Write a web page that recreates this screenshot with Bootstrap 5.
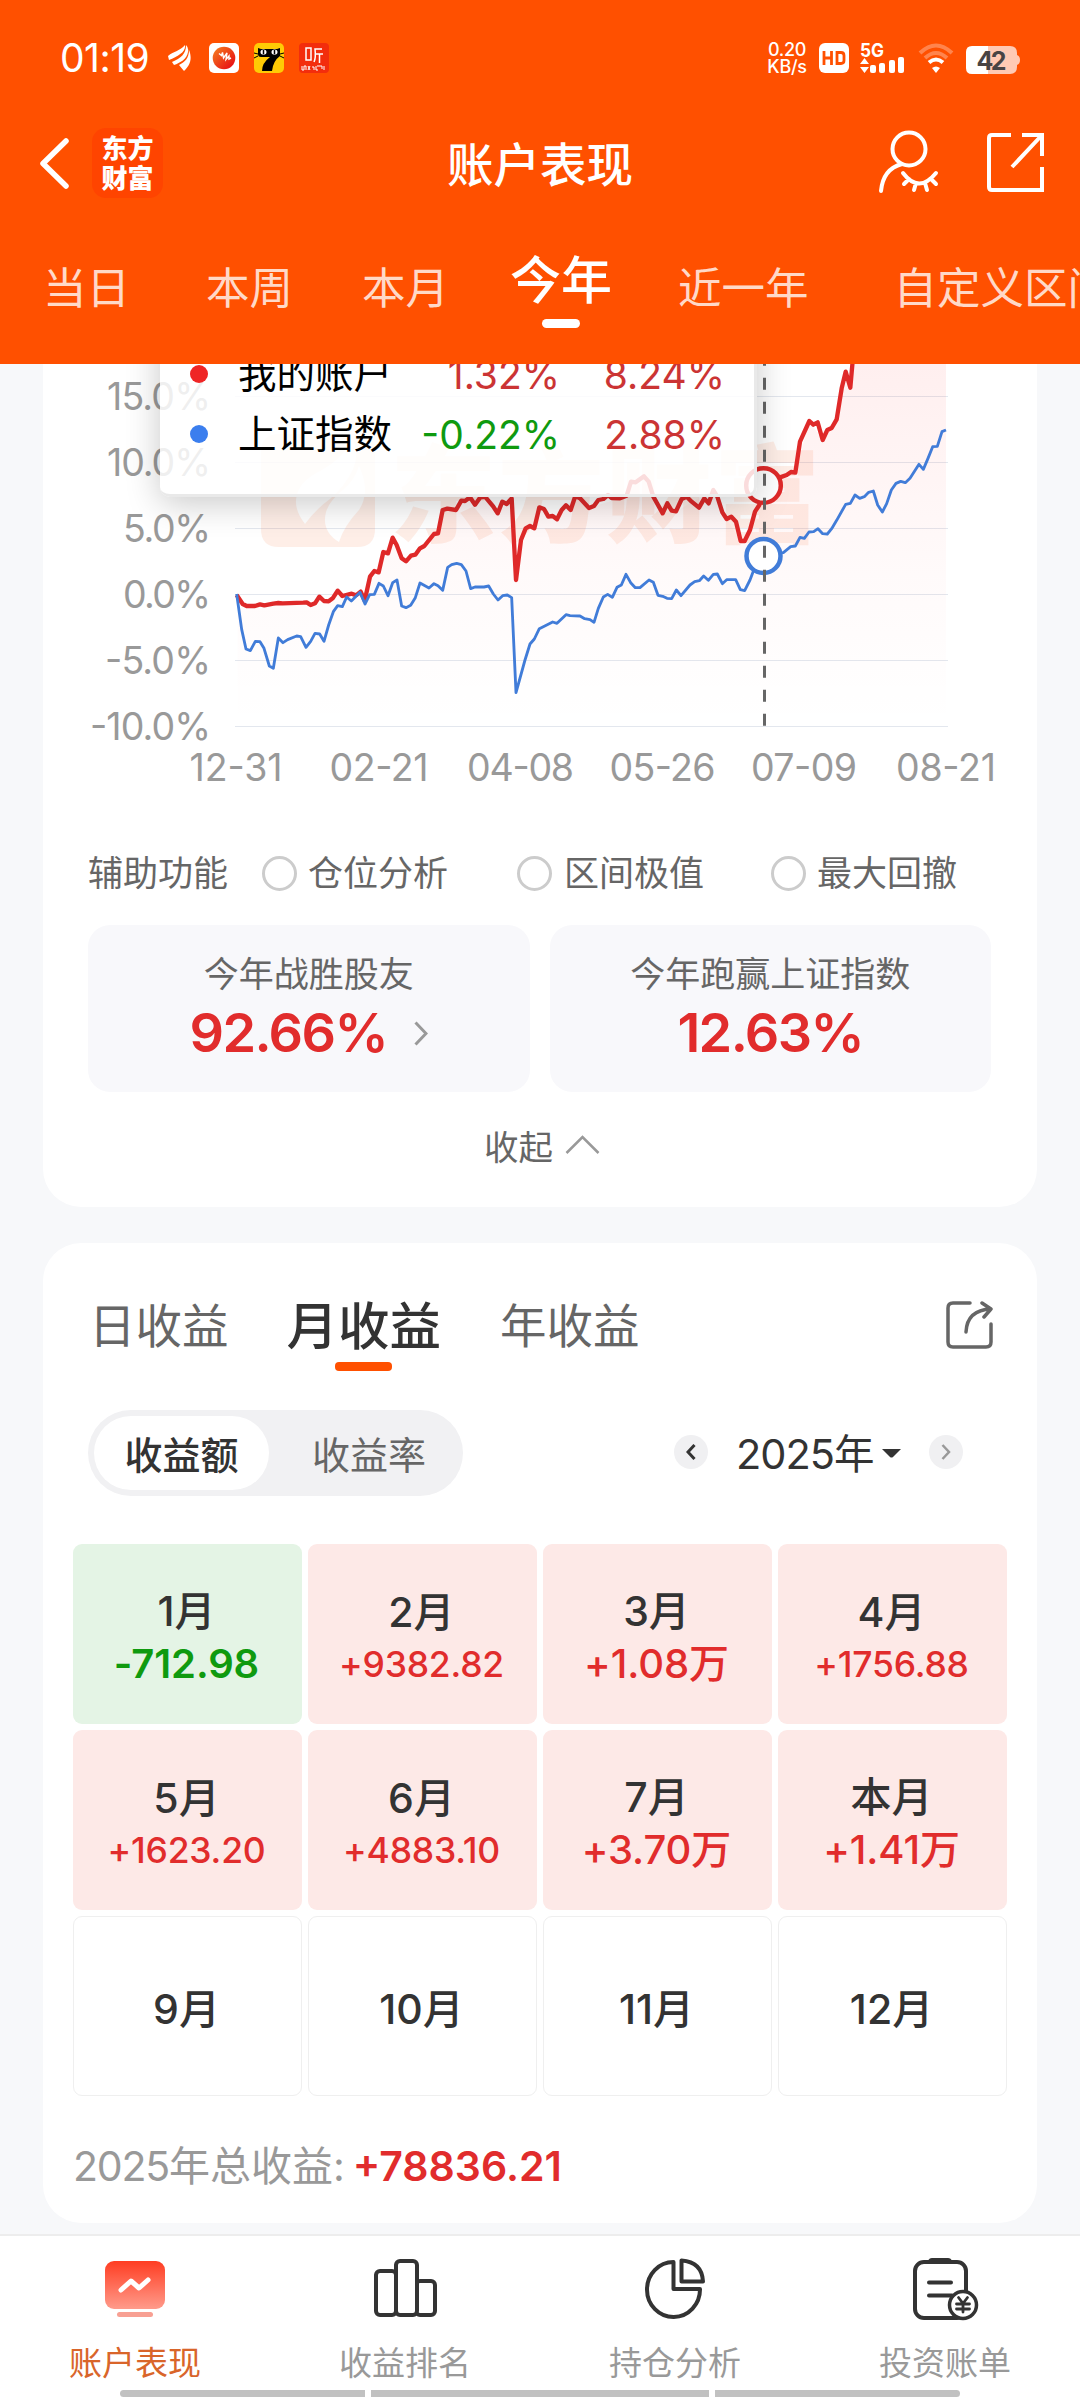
<!DOCTYPE html>
<html lang="zh-CN">
<head>
<meta charset="utf-8">
<meta name="viewport" content="width=device-width, initial-scale=1">
<title>账户表现</title>
<link rel="stylesheet" href="https://cdn.jsdelivr.net/npm/bootstrap@5.3.0/dist/css/bootstrap.min.css">
<style>
  body{width:1080px;height:2400px;overflow:hidden;background:#f7f8fa;font-family:Inter,"Noto Sans CJK SC",sans-serif;color:#333;line-height:1;white-space:nowrap}
  svg{display:block;flex:none}
  .app-head{height:364px;background:#ff5000;color:#fff}
  .status-row{height:116px;padding:0 60px}
  .clock-text{font-size:39px;width:89px;line-height:44px;letter-spacing:-.5px}
  .net-speed{font-size:18px;line-height:17px;width:42px;text-align:center;letter-spacing:-.3px;font-weight:500}
  .title-row{height:98px;padding:0 36px 0 40px}
  .brand-box{width:71px;height:70px;border-radius:14px;background:#ff4400;font:900 26px/30px "Noto Sans CJK SC",sans-serif;margin-left:23px}
  .page-title{font-size:46.5px;font-weight:500}
  .period-tabs{height:150px;padding:53px 0 0 43px;font-size:43.5px;color:#ffd9c8;line-height:43px}
  .period-tabs .on{font-size:51px;font-weight:500;color:#fff;line-height:50px;margin-top:-11px}
  .period-tabs .on::after{content:"";display:block;width:38px;height:9px;border-radius:5px;background:#fff;margin:13px auto 0}
  .panel{width:994px;margin:0 auto;background:#fff}
  .panel-a{height:843px;border-radius:0 0 38px 38px}
  .panel-b{height:980px;margin-top:36px;border-radius:38px}
  .chart-box{height:440px;position:relative;overflow:hidden;margin-bottom:40px}
  .tip-box{position:absolute;left:117px;top:-80px;width:597px;height:213px;background:rgba(255,255,255,.84);border:solid #e9e9e9;border-width:0 3px 3px 0;border-radius:10px;box-shadow:0 6px 34px rgba(0,0,0,.22);padding-top:60px;color:#000;font-size:38.5px}
  .tip-box .line{height:60px;padding:0 29px 0 30px}
  .tip-box .dot{width:18px;height:18px;border-radius:50%;margin-right:30px}
  .tip-box .num{font-size:39px;text-align:right;letter-spacing:0}
  .red{color:#e12c2c}.tip-box .red{color:#cb3434}.green{color:#0f9a0f}
  .aid-row{height:58px;margin-bottom:-2px;padding-left:45px;font-size:35px;color:#666}
  .ring{width:35px;height:35px;border:3px solid #ccc;border-radius:50%}
  .stat-row{padding:25px 46px 0 45px;gap:20px}
  .stat-box{height:167px;border-radius:22px;background:#f8f8fb;padding-top:32px}
  .stat-box .cap{font-size:35px;line-height:35px;color:#666}
  .stat-box .val{font-size:54px;line-height:54px;font-weight:600;margin-top:14px;letter-spacing:-1.6px}
  .fold-row{height:40px;margin-top:36px;font-size:34.5px;color:#666}
  .kind-tabs{height:102px;padding:51px 44px 0 46px;font-size:46.5px;line-height:64px;color:#666}
  .kind-tabs .on{font-size:51.5px;font-weight:500;color:#333;margin-left:58px}
  .kind-tabs .on::after{content:"";display:block;width:57px;height:9px;border-radius:4px;background:#ff5000;margin:4px auto 0}
  .pick-row{height:86px;margin-top:65px;padding-left:45px}
  .switch-pill{width:375px;height:86px;border-radius:43px;background:#f1f1f3;padding:6px;font-size:38px;color:#666}
  .switch-pill>div{height:74px;border-radius:37px;width:175px;padding-top:3px}
  .switch-pill>.on{background:#fff;color:#333;font-weight:500}
  .round-btn{width:34px;height:34px;border-radius:50%;background:#f0f0f2}
  .month-grid{display:grid;grid-template-columns:repeat(4,229px);grid-auto-rows:180px;gap:6px;margin:48px 30px 0}
  .cell{border-radius:9px;background:#fde9e7;font-size:41px;font-weight:500;line-height:48px;padding:12px 2px 0 0}
  .cell .amt{font-size:35.5px;line-height:57px;letter-spacing:-.2px}
  .cell .amt.big{font-size:40px;letter-spacing:-.1px}
  .cell .big-sum{margin-top:-1px}
  .cell.gain-neg{background:#e4f4e5}
  .cell.gain-neg .amt{font-weight:600}
  .cell.none{background:#fff;border:1.5px solid #efefef;padding-top:6px}
  .sum-row{font-size:41px;color:#999;padding-left:30px;margin-top:46px;line-height:48px}
  .foot-bar{height:166px;margin-top:11px;background:#fff;border-top:2px solid #ededed}
  .foot-bar .tab-item{width:270px;padding-top:20px;font-size:33px;color:#999}
  .tab-item svg{margin-bottom:25px}
  .home-bars{gap:6px;height:7px;margin-top:10px}
  .home-bars i{background:#c1c1c1;height:7px}
</style>
</head>
<body>
<header class="app-head">
  <div class="status-row d-flex align-items-center">
    <div class="clock-text">01:19</div>
    <svg width="24" height="30" viewBox="0 0 24 30" style="margin-left:19px" fill="#fff"><path d="M0 13C6 8 12 8 17 2C18 9 10 13 1 17ZM4 19C13 15 18 11 18 2Q21 5 20 9C19 16 12 20 6 22ZM11 22C17 19 21 15 21 7C25 17 21 23 16 28Z"/></svg>
    <svg width="30" height="30" viewBox="0 0 30 30" style="margin-left:17px"><defs><linearGradient id="ball" x1="0" y1="0" x2="1" y2="1"><stop offset="0" stop-color="#f58220"/><stop offset="1" stop-color="#e60012"/></linearGradient></defs><rect width="30" height="30" rx="5" fill="#fff"/><circle cx="15" cy="15" r="11.3" fill="url(#ball)"/><path d="M10 10.500l2.500 2 1-3 1 5.500 3.500-5-1 6.500 3-3.500 0 3 2-1" fill="none" stroke="#fff" stroke-width="1.400"/></svg>
    <svg width="30" height="30" viewBox="0 0 30 30" style="margin-left:15px"><rect width="30" height="30" rx="5" fill="#ffcb05"/><path d="M4 5l3 1h16l3-1v8q-7 5-8 15H8q0-8 8-14H7q-3 0-3-3Z"/><path d="M0 10l4 1M0 15l4-2M30 10l-4 1M30 15l-4-2" stroke="#000"/><ellipse cx="9.500" cy="9" rx="3" ry="2.600" fill="#fff"/><ellipse cx="20.500" cy="9" rx="3" ry="2.600" fill="#fff"/><path d="M9.500 7v4M20.500 7v4" stroke="#000" stroke-width="1.500"/></svg>
    <svg width="30" height="30" viewBox="0 0 30 30" style="margin-left:15px"><rect width="30" height="30" rx="4" fill="#f32d0c"/><g fill="none" stroke="#fff" stroke-width="1.500"><path d="M7 5h5v12H7ZM15 19q2-4 1-13h7M16 11h8M20.500 11v9"/><path d="M3 23v4h2v-4h2v4M9 23l2 4M11 23l-2 4M13 24h2v3M17 23v4h2M18 23h5v3M25 23v4" stroke-width="1"/></g></svg>
    <div class="ms-auto net-speed" style="margin-right:11px">0.20<br>KB/s</div>
    <svg width="30" height="30" viewBox="0 0 30 30" style="margin-right:11px"><rect width="30" height="30" rx="6" fill="#fff"/><path d="M5 8v14M12.500 8v14M5 15h7.500M18 9.500h4q3 0 3 3v5q0 3-3 3h-4Z" stroke="#ff5000" stroke-width="2.800" fill="none"/></svg>
    <svg width="45" height="30" viewBox="0 0 45 30" style="margin-right:13px" fill="#fff"><text x="0" y="14" font-size="18.500" font-weight="700" textLength="24" lengthAdjust="spacingAndGlyphs">5G</text><path d="M0 21l4.500-6 4.500 6zM0 24h9l-4.500 6z"/><rect x="10" y="22" width="6" height="8" rx="2"/><rect x="19" y="20" width="6" height="10" rx="2"/><rect x="29" y="17" width="6" height="13" rx="2"/><rect x="38" y="14" width="6" height="16" rx="2"/></svg>
    <svg width="36" height="30" viewBox="0 0 36 30" style="margin-right:12px" fill="none" stroke="#fff" stroke-width="4"><path d="M2 10q16-15 32 0M7 15q11-10 22 0" opacity=".3"/><path d="M11 19.500q7-6 14 0"/><path d="M14 25q4-3 8 0l-4 5z" fill="#fff" stroke="none"/></svg>
    <svg width="54" height="28" viewBox="0 0 54 28" style="margin-top:4px"><path d="M6 0H22V28H6Q0 28 0 22V6Q0 0 6 0" fill="#fff"/><path d="M22 0h22q7 0 7 7v2q3 1 3 5t-3 5v2q0 7-7 7H22z" fill="#ffcab4"/><text x="25.500" y="23.500" font-size="25" font-weight="700" fill="#494444" text-anchor="middle" textLength="30">42</text></svg>
  </div>
  <div class="title-row d-flex align-items-center position-relative">
    <svg width="29" height="51" viewBox="0 0 29 51" style="margin-top:-3px" fill="none" stroke="#fff" stroke-width="5.500" stroke-linecap="round" stroke-linejoin="round"><path d="M26 3 3 25.500 26 48"/></svg>
    <div class="brand-box text-center pt-1" style="margin-top:-4px">东方<br>财富</div>
    <div class="page-title position-absolute start-50 translate-middle-x">账户表现</div>
    <svg class="ms-auto" width="62" height="64" viewBox="0 0 62 64" style="margin-top:-6px" fill="none" stroke="#fff" stroke-width="4" stroke-linecap="round"><circle cx="32" cy="19" r="16.500"/><path d="M25 34Q6 39 4 61M26 43q16 21 33 0M32 49l-5 5M39 53l-2 7M48 53l2 7M54 49l5 5"/></svg>
    <svg width="57" height="59" viewBox="0 0 57 59" style="margin-left:48px;margin-top:-6px" fill="none" stroke="#fff" stroke-width="4"><path d="M24 2H5Q2 2 2 5V54Q2 57 5 57H55V34M35 2H55V23M55 2 25 34"/></svg>
  </div>
  <nav class="period-tabs d-flex overflow-hidden">
    <div>当日</div><div style="margin-left:76px">本周</div><div style="margin-left:69px">本月</div><div class="on" style="margin-left:61px">今年</div><div style="margin-left:66px">近一年</div><div style="margin-left:85px">自定义区间</div>
  </nav>
</header>

<section class="panel panel-a">
  <div class="chart-box">
    <svg width="994" height="440" viewBox="43 364 994 440">
      <defs><linearGradient id="fade" gradientUnits="userSpaceOnUse" x1="0" y1="0" x2="0" y2="1129"><stop offset="0" stop-color="#ff2020" stop-opacity=".075"/><stop offset=".6" stop-color="#ff2020" stop-opacity=".022"/><stop offset="1" stop-color="#ff2020" stop-opacity="0"/></linearGradient></defs>
      <path d="M235 396.500H948M235 462.500H948M235 528.500H948M235 594.500H948M235 660.500H948M235 726.500H948" stroke="#e3e7ee"/>
      <g fill="#fb6a2c" opacity=".11">
        <path fill-rule="evenodd" d="M279 434H357Q375 434 375 452V529Q375 547 357 547H279Q261 547 261 529V452Q261 434 279 434M296 500Q297 482 322 470Q346 456 352 438Q360 453 353 469Q345 486 330 499Q316 509 305 524Q295 511 296 500M339 542Q321 531 326 512Q329 501 343 490Q355 480 359 466Q371 492 359 510Q344 526 339 542"/>
        <text x="390" y="534" font-size="106" font-weight="900" textLength="430">东方财富</text>
      </g>
      <g fill="none" stroke-linejoin="round" transform="translate(60 350) scale(.333333)">
        <path fill="url(#fade)" d="M533 735 548 762 560 768 730 758 752 765 778 740 806 754 833 722 914 752 943 663 956 667 970 606 998 563 1025 625 1038 634 1080 595 1134 550 1148 480 1188 480 1204 452 1300 452 1313 490 1355 445 1368 690 1397 535 1423 535 1438 472 1491 508 1546 438 1587 474 1680 445 1752 379 1780 440 1808 490 1848 484 1960 420 2000 507 2042 573 2070 540 2113 407 2206 368 2248 213 2288 270 2330 208 2357 65 2371 113 2380 20 2658 -100 2658 1129 533 1129Z"/>
        <path stroke="#df2929" stroke-width="13" d="M530 735 548 762 560 768 585 768 600 763 613 766 640 761 655 759 668 760 730 758 740 757 752 765 765 760 778 740 792 753 806 754 818 745 833 722 847 738 875 731 888 736 902 725 914 752 930 680 943 663 956 667 970 606 984 610 998 563 1010 585 1025 625 1038 634 1053 617 1066 614 1080 595 1093 588 1122 552 1134 550 1148 480 1162 476 1188 480 1204 452 1215 453 1230 442 1245 464 1260 443 1275 440 1300 470 1313 490 1327 455 1340 462 1355 445 1368 690 1383 570 1397 535 1410 528 1423 535 1438 472 1452 477 1465 500 1478 498 1491 508 1505 480 1518 466 1532 480 1546 438 1560 445 1587 474 1602 468 1615 450 1630 447 1644 435 1655 444 1680 445 1700 437 1713 395 1727 397 1752 379 1766 395 1780 440 1808 490 1822 460 1835 482 1848 484 1865 447 1880 440 1895 455 1917 473 1933 445 1946 460 1960 420 1972 440 1987 487 2000 507 2014 500 2028 515 2042 573 2054 573 2070 540 2085 485 2098 465 2113 407 2160 382 2180 375 2193 366 2206 368 2220 275 2248 213 2260 224 2273 217 2288 270 2302 240 2315 234 2330 208 2345 115 2357 65 2371 113 2380 10"/>
        <path stroke="#417cd8" stroke-width="8.500" d="M530 732 545 838 558 897 571 902 586 874 600 875 612 895 628 948 640 955 655 864 669 878 683 869 710 858 722 860 738 892 752 874 765 850 779 852 792 874 806 825 820 785 833 767 847 770 860 741 874 753 900 727 915 762 929 734 943 733 957 700 970 708 984 737 998 698 1011 690 1025 768 1038 773 1052 766 1066 743 1080 699 1107 714 1122 701 1134 707 1148 721 1163 652 1175 644 1190 640 1204 644 1218 663 1232 716 1245 711 1272 711 1286 708 1300 732 1314 750 1328 737 1342 735 1355 743 1368 1028 1395 930 1410 882 1423 867 1438 836 1478 816 1491 820 1518 794 1530 797 1560 798 1574 806 1590 809 1602 817 1615 775 1630 741 1643 733 1657 742 1671 712 1684 705 1698 673 1712 698 1726 713 1740 713 1767 690 1780 697 1794 736 1808 739 1821 745 1835 746 1849 720 1863 737 1890 705 1904 695 1918 692 1931 678 1945 691 1960 673 1972 672 1987 701 2000 689 2027 689 2041 719 2054 722 2070 690 2085 650 2113 618 2170 608 2192 590 2206 588 2220 562 2233 565 2247 546 2261 545 2274 536 2288 551 2302 552 2315 536 2330 511 2357 463 2371 460 2385 435 2399 445 2413 440 2426 427 2440 423 2453 465 2467 486 2480 461 2494 420 2508 400 2522 394 2536 398 2550 385 2577 343 2590 358 2604 325 2618 290 2632 289 2646 245 2658 240"/>
      </g>
      <g fill="#fff" stroke-width="4.500"><circle cx="763.500" cy="485.500" r="17.300" stroke="#df2929"/><circle cx="763.500" cy="556" r="17" stroke="#417cd8"/></g>
      <path d="M764.500 353.700V726" stroke="#666" stroke-width="3" stroke-dasharray="12 12"/>
      <g font-size="37.500" fill="#999" text-anchor="end">
        <text x="211" y="410" textLength="104">15.0%</text><text x="211" y="476" textLength="104">10.0%</text><text x="211" y="542" textLength="88">5.0%</text><text x="211" y="608" textLength="88">0.0%</text><text x="211" y="673.500" textLength="106">-5.0%</text><text x="211" y="739.500" textLength="121">-10.0%</text>
      </g>
      <g font-size="37.500" fill="#999" text-anchor="middle">
        <text x="236" y="781" textLength="93">12-31</text><text x="379" y="781" textLength="99">02-21</text><text x="520.500" y="781" textLength="107">04-08</text><text x="662.500" y="781" textLength="106">05-26</text><text x="804" y="781" textLength="106">07-09</text><text x="946" y="781" textLength="100">08-21</text>
      </g>
    </svg>
    <div class="tip-box">
      <div class="line d-flex align-items-center"><span class="dot" style="background:#ef2525"></span><span>我的账户</span><span class="num red ms-auto" style="width:140px">1.32%</span><span class="num red" style="width:165px">8.24%</span></div>
      <div class="line d-flex align-items-center"><span class="dot" style="background:#3b7eee"></span><span>上证指数</span><span class="num green ms-auto" style="width:140px">-0.22%</span><span class="num red" style="width:165px">2.88%</span></div>
    </div>
  </div>
  <div class="aid-row d-flex align-items-center">
    <span>辅助功能</span>
    <span class="ring" style="margin-left:34px"></span><span style="margin-left:11px">仓位分析</span>
    <span class="ring" style="margin-left:69px"></span><span style="margin-left:12px">区间极值</span>
    <span class="ring" style="margin-left:67px"></span><span style="margin-left:11px">最大回撤</span>
  </div>
  <div class="stat-row d-flex text-center">
    <div class="stat-box flex-fill w-50"><div class="cap">今年战胜股友</div>
      <div class="val red d-flex justify-content-center align-items-center">92.66%<svg width="14" height="25" viewBox="0 0 14 25" style="margin-left:27px" fill="none" stroke="#999" stroke-width="3"><path d="M1.500 1.500 12 12.500 1.500 23.500"/></svg></div></div>
    <div class="stat-box flex-fill w-50"><div class="cap">今年跑赢上证指数</div><div class="val red">12.63%</div></div>
  </div>
  <div class="fold-row d-flex justify-content-center align-items-center ps-1">收起<svg width="35" height="19" viewBox="0 0 35 19" style="margin-left:12px;margin-top:-7px" fill="none" stroke="#999" stroke-width="2.500"><path d="M1.500 18 17.500 2 33.500 18"/></svg></div>
</section>

<section class="panel panel-b">
  <div class="kind-tabs d-flex">
    <div>日收益</div><div class="on">月收益</div><div style="margin-left:59px">年收益</div>
    <svg class="ms-auto" width="47" height="48" viewBox="0 0 47 48" style="margin-top:7px" fill="none" stroke="#666" stroke-width="3.500" stroke-linecap="round" stroke-linejoin="round"><path d="M24 2H7Q2 2 2 7V41Q2 46 7 46H40Q45 46 45 41V23M20 31Q21 9 45 8M36 2l9 6-7 8"/></svg>
  </div>
  <div class="pick-row d-flex align-items-center">
    <div class="switch-pill d-flex"><div class="on d-flex align-items-center justify-content-center">收益额</div><div class="d-flex align-items-center justify-content-center flex-fill ps-2 ms-1">收益率</div></div>
    <div class="round-btn d-flex align-items-center justify-content-center" style="margin-left:211px;margin-top:-3px"><svg width="10" height="16" viewBox="0 0 10 16" fill="none" stroke="#333" stroke-width="3"><path d="M8.500 1 2 8l6.500 7"/></svg></div>
    <div style="margin-left:28px;font-size:40.500px;width:139px;padding-top:3px"><span style="font-size:41.500px;letter-spacing:-1px">2025</span>年</div>
    <svg width="19" height="9" viewBox="0 0 19 9" style="margin-left:7px" fill="#333"><path d="M0 0H19L11 8Q9.500 9 8 8Z"/></svg>
    <div class="round-btn d-flex align-items-center justify-content-center" style="margin-left:28px;margin-top:-3px"><svg width="10" height="16" viewBox="0 0 10 16" fill="none" stroke="#999" stroke-width="2.500"><path d="M1.500 1 8 8l-6.500 7"/></svg></div>
  </div>
  <div class="month-grid text-center">
    <div class="cell gain-neg d-flex flex-column justify-content-center"><div class="big-sum">1月</div><div class="amt big green">-712.98</div></div>
    <div class="cell d-flex flex-column justify-content-center"><div>2月</div><div class="amt red">+9382.82</div></div>
    <div class="cell d-flex flex-column justify-content-center"><div class="big-sum">3月</div><div class="amt big red">+1.08万</div></div>
    <div class="cell d-flex flex-column justify-content-center"><div>4月</div><div class="amt red">+1756.88</div></div>
    <div class="cell d-flex flex-column justify-content-center"><div>5月</div><div class="amt red">+1623.20</div></div>
    <div class="cell d-flex flex-column justify-content-center"><div>6月</div><div class="amt red">+4883.10</div></div>
    <div class="cell d-flex flex-column justify-content-center"><div class="big-sum">7月</div><div class="amt big red">+3.70万</div></div>
    <div class="cell d-flex flex-column justify-content-center"><div class="big-sum">本月</div><div class="amt big red">+1.41万</div></div>
    <div class="cell none d-flex flex-column justify-content-center"><div>9月</div></div>
    <div class="cell none d-flex flex-column justify-content-center"><div>10月</div></div>
    <div class="cell none d-flex flex-column justify-content-center"><div>11月</div></div>
    <div class="cell none d-flex flex-column justify-content-center"><div>12月</div></div>
  </div>
  <div class="sum-row"><span style="letter-spacing:-1.2px">2025</span>年总收益:<span class="red" style="margin-left:8px;font-weight:600;letter-spacing:0">+78836.21</span></div>
</section>

<footer class="foot-bar">
  <div class="d-flex">
    <div class="tab-item d-flex flex-column align-items-center" style="color:#d9652a">
      <svg width="66" height="66" viewBox="0 0 66 66"><defs><linearGradient id="hot" x1="0" y1="0" x2="0" y2="1"><stop offset="0" stop-color="#ff3d22"/><stop offset="1" stop-color="#ff9b8b"/></linearGradient></defs><rect x="3" y="5" width="60" height="48" rx="9" fill="url(#hot)"/><rect x="15" y="56" width="36" height="5" rx="2.500" fill="#f8a093"/><path d="M19 34 29 25 37 32 46 24" fill="none" stroke="#fff" stroke-width="5" stroke-linecap="round" stroke-linejoin="round"/></svg>账户表现</div>
    <div class="tab-item d-flex flex-column align-items-center">
      <svg width="66" height="66" viewBox="0 0 66 66" fill="none" stroke="#333" stroke-width="4"><rect x="4" y="15" width="20" height="44" rx="4"/><rect x="44" y="25" width="19" height="34" rx="4"/><rect x="24" y="5" width="21" height="54" rx="4" fill="#fff"/></svg>收益排名</div>
    <div class="tab-item d-flex flex-column align-items-center">
      <svg width="66" height="66" viewBox="0 0 66 66" fill="none" stroke="#333" stroke-width="4" stroke-linejoin="round"><path d="M31.500 6A26.500 27.500 0 1 0 58 33H31.500ZM39.500 4.500V25.500H61Q60 6 39.500 4.500Z"/></svg>持仓分析</div>
    <div class="tab-item d-flex flex-column align-items-center">
      <svg width="70" height="66" viewBox="0 0 70 66" fill="none" stroke="#333" stroke-width="4" stroke-linecap="round"><rect x="5" y="6" width="51" height="56" rx="9"/><path d="M18 5q1-3 4-3H38q3 0 4 3v2H18Z" fill="#333" stroke="none"/><path d="M19 26.500H41M19 39.500H42"/><circle cx="53" cy="49" r="13.500" fill="#fff" stroke-width="3.500"/><path d="M48.500 41.500 53 47.500 57.500 41.500M53 47.500V56M46.500 48H59.500M46.500 53H59.500" stroke-width="2.800"/></svg>投资账单</div>
  </div>
  <div class="home-bars d-flex justify-content-center"><i style="width:245px;border-radius:4px 0 0 4px"></i><i style="width:338px"></i><i style="width:245px;border-radius:0 4px 4px 0"></i></div>
</footer>
<script src="https://cdn.jsdelivr.net/npm/bootstrap@5.3.0/dist/js/bootstrap.bundle.min.js"></script>
</body>
</html>
